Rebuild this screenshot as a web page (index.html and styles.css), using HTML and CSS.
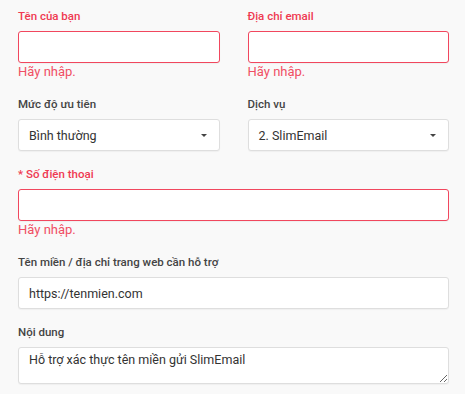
FILE: index.html
```html
<!DOCTYPE html>
<html lang="vi">
<head>
    <meta charset="UTF-8">
    <meta name="viewport" content="width=device-width, initial-scale=1.0">
    <title>Hỗ trợ</title>
    <link rel="stylesheet" href="styles.css">
</head>
<body>
    <form class="form">
        <div class="row">
            <div class="field has-error">
                <label>Tên của bạn</label>
                <input type="text" class="control">
                <div class="help">Hãy nhập.</div>
            </div>
            <div class="field has-error">
                <label>Địa chỉ email</label>
                <input type="text" class="control">
                <div class="help">Hãy nhập.</div>
            </div>
        </div>
        <div class="row">
            <div class="field">
                <label>Mức độ ưu tiên</label>
                <div class="control select">
                    <span>Bình thường</span>
                    <span class="caret"></span>
                </div>
            </div>
            <div class="field">
                <label>Dịch vụ</label>
                <div class="control select">
                    <span>2. SlimEmail</span>
                    <span class="caret"></span>
                </div>
            </div>
        </div>
        <div class="field has-error">
            <label>* Số điện thoại</label>
            <input type="text" class="control">
            <div class="help">Hãy nhập.</div>
        </div>
        <div class="field">
            <label>Tên miền / địa chỉ trang web cần hỗ trợ</label>
            <input type="text" class="control" value="https://tenmien.com">
        </div>
        <div class="field">
            <label>Nội dung</label>
            <textarea class="control area">Hỗ trợ xác thực tên miền gửi SlimEmail</textarea>
        </div>
    </form>
</body>
</html>
```

FILE: styles.css
```css
body {
    margin: 0;
    padding: 8px 16px 0 18px;
    background: #f9f9f9;
    font-family: Roboto, 'Liberation Sans', sans-serif;
    color: #333;
}
.row {
    display: grid;
    grid-template-columns: 1fr 1fr;
    column-gap: 28px;
}
.field {
    display: flex;
    flex-direction: column;
    margin-bottom: 15px;
}
.field label {
    font-size: 11.5px;
    font-weight: 500;
    line-height: 17px;
    color: #444;
    margin-bottom: 6px;
}
.control {
    box-sizing: border-box;
    width: 100%;
    height: 32px;
    margin: 0;
    padding: 0 10px;
    border: 1px solid #dedede;
    border-radius: 3px;
    background: #fff;
    font-family: inherit;
    font-size: 12.5px;
    color: #333;
    box-shadow: 0 1px 1px rgba(0, 0, 0, 0.04);
}
.select {
    display: flex;
    align-items: center;
    justify-content: space-between;
    padding-right: 12px;
}
.caret {
    width: 0;
    height: 0;
    border-left: 3px solid transparent;
    border-right: 3px solid transparent;
    border-top: 3px solid #444;
}
.area {
    height: 37px;
    padding: 3px 10px;
    line-height: 17px;
    resize: vertical;
}
.has-error label {
    color: #ef3a52;
}
.has-error .control {
    border-color: #f1475e;
}
.help {
    font-size: 13px;
    line-height: 18px;
    color: #f04f64;
}
```
